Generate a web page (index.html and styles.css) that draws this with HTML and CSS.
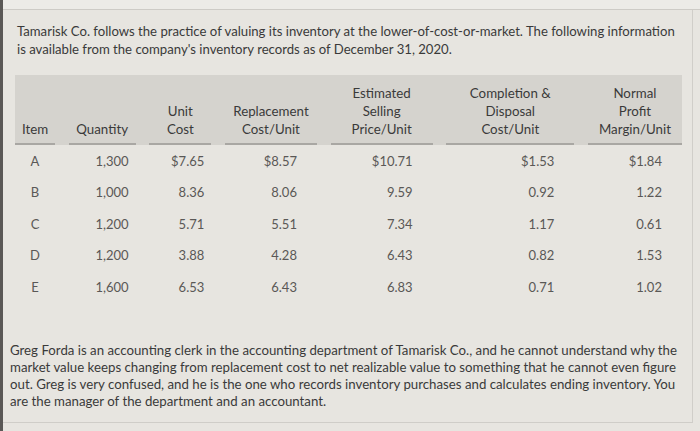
FILE: index.html
```html
<!DOCTYPE html>
<html>
<head>
<meta charset="utf-8">
<link rel="stylesheet" href="styles.css">
</head>
<body>
<div class="screen">
  <div class="topband"></div>
  <div class="content">
    <p class="intro">Tamarisk Co. follows the practice of valuing its inventory at the lower-of-cost-or-market. The following information<br>is available from the company's inventory records as of December 31, 2020.</p>

    <div class="table">
      <div class="thead">
        <div class="th">Item</div>
        <div class="th">Quantity</div>
        <div class="th">Unit<br>Cost</div>
        <div class="th">Replacement<br>Cost/Unit</div>
        <div class="th">Estimated<br>Selling<br>Price/Unit</div>
        <div class="th">Completion &amp;<br>Disposal<br>Cost/Unit</div>
        <div class="th">Normal<br>Profit<br>Margin/Unit</div>
      </div>
      <div class="tbody">
        <div class="td item">A</div><div class="td q">1,300</div><div class="td uc">$7.65</div><div class="td num">$8.57</div><div class="td num">$10.71</div><div class="td num">$1.53</div><div class="td num">$1.84</div>
        <div class="td item">B</div><div class="td q">1,000</div><div class="td uc">8.36</div><div class="td num">8.06</div><div class="td num">9.59</div><div class="td num">0.92</div><div class="td num">1.22</div>
        <div class="td item">C</div><div class="td q">1,200</div><div class="td uc">5.71</div><div class="td num">5.51</div><div class="td num">7.34</div><div class="td num">1.17</div><div class="td num">0.61</div>
        <div class="td item">D</div><div class="td q">1,200</div><div class="td uc">3.88</div><div class="td num">4.28</div><div class="td num">6.43</div><div class="td num">0.82</div><div class="td num">1.53</div>
        <div class="td item">E</div><div class="td q">1,600</div><div class="td uc">6.53</div><div class="td num">6.43</div><div class="td num">6.83</div><div class="td num">0.71</div><div class="td num">1.02</div>
      </div>
    </div>

    <p class="story">Greg Forda is an accounting clerk in the accounting department of Tamarisk Co., and he cannot understand why the<br>market value keeps changing from replacement cost to net realizable value to something that he cannot even figure<br>out. Greg is very confused, and he is the one who records inventory purchases and calculates ending inventory. You<br>are the manager of the department and an accountant.</p>
  </div>
</div>
</body>
</html>
```

FILE: styles.css
```css
html, body {
  margin: 0;
  padding: 0;
}
body {
  width: 700px;
  height: 431px;
  overflow: hidden;
  background: #e9e7e3;
  font-family: Lato, "Open Sans", sans-serif;
  color: #3a3a3a;
}
.screen {
  height: 431px;
  border-left: 3px solid #5a5856;
  box-sizing: border-box;
  background: #e7e5e0;
}
.topband {
  height: 9px;
  background: #ecebe7;
  border-bottom: 1px solid #cdcbc6;
}
.content {
  width: 690px;
  height: 413px;
  box-sizing: border-box;
  border-right: 1px solid #d0cec9;
  border-bottom: 1px solid #cfcdc8;
  padding-top: 12px;
}
.intro {
  margin: 0;
  padding-left: 14px;
  font-size: 13.15px;
  line-height: 18px;
  white-space: nowrap;
}
.table {
  margin: 17px 0 0 12px;
  width: 667px;
}
.thead, .tbody {
  display: grid;
  grid-template-columns: 40px 67px 62px 92px 102px 128px 94px;
  justify-content: space-between;
}
.thead {
  background: #d5d3ce;
  padding-top: 9px;
}
.th {
  align-self: end;
  text-align: center;
  font-size: 13.3px;
  line-height: 18px;
  padding-bottom: 5px;
  border-bottom: 2px solid #a9a7a3;
  color: #3a3a3a;
}
.tbody {
  grid-auto-rows: 31.5px;
}
.td {
  font-size: 13px;
  color: #5a5856;
  display: flex;
  align-items: center;
  justify-content: flex-end;
}
.td.item {
  justify-content: center;
}
.td.q, .td.uc {
  padding-right: 7px;
}
.td.num {
  padding-right: 20px;
}
.story {
  margin: 39px 0 0 0;
  padding-left: 7px;
  font-size: 13.25px;
  line-height: 17px;
  white-space: nowrap;
}
```
